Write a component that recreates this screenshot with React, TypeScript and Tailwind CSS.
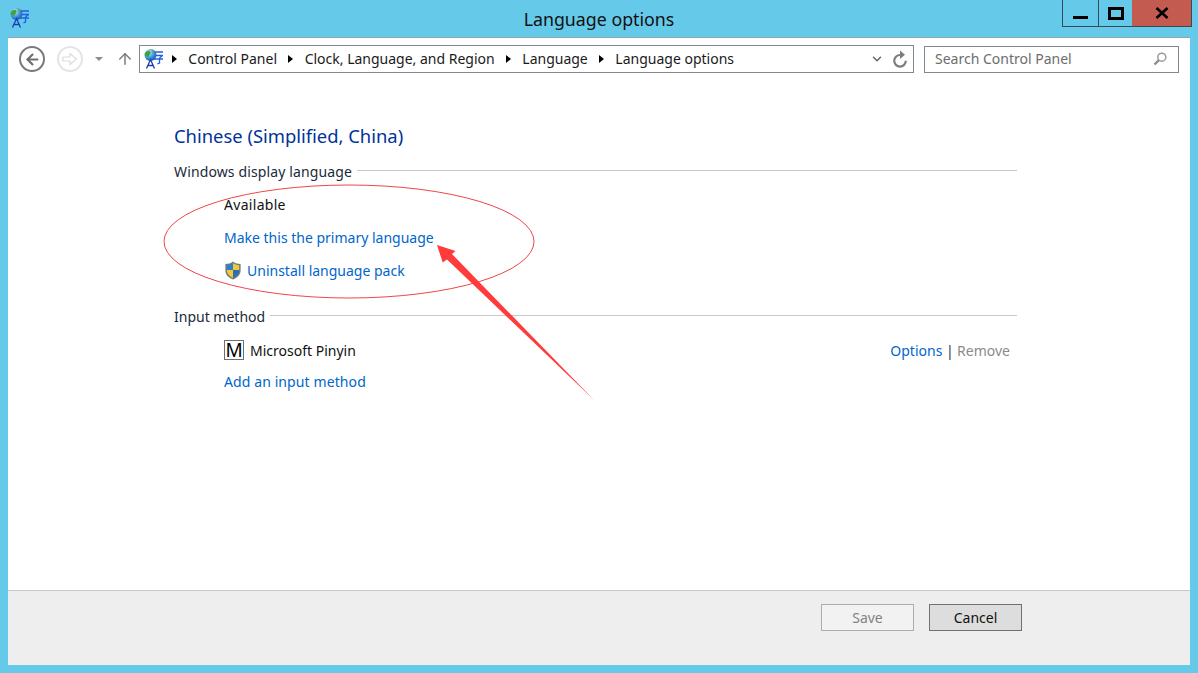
import { ArrowLeft, ArrowUp, ChevronDown } from "lucide-react";

function LanguageIcon({ className }: { className?: string }) {
  return (
    <svg viewBox="0 0 20 20" className={className}>
      <defs>
        <radialGradient id="globe" cx="35%" cy="30%" r="75%">
          <stop offset="0%" stopColor="#d8f0ff" />
          <stop offset="55%" stopColor="#3f9be0" />
          <stop offset="100%" stopColor="#1c5aa8" />
        </radialGradient>
      </defs>
      <circle cx="7.500" cy="6" r="6" fill="url(#globe)" />
      <path d="M2.500 3.500c2-2 4.500-1.800 5 0 .4 1.400-1 1.800-1.500 3.200-.4 1.200-2 1.800-3.400.4C1.500 6 1.600 4.500 2.500 3.500z" fill="#3fa33a" />
      <path d="M9 .5c1.600.4 2.600 1.200 3.200 2.500L9.500 4z" fill="#5cb548" />
      <path d="M3.500 19.500L7.500 10.500l4 9M5 16.500h5" fill="none" stroke="#1b3bb5" strokeWidth="1.300" />
      <path d="M11.500 3h8.500M13 6.500h6.500l-3 2.500M10.500 10h9.500M16.500 9v5l-2 .8" fill="none" stroke="#2360e0" strokeWidth="1.300" />
    </svg>
  );
}

function ShieldIcon() {
  return (
    <svg viewBox="0 0 18 20" className="h-[19px] w-[18px] shrink-0">
      <path d="M9 .5C6.500 2.500 4 3 1 3.200V10c0 4.500 3.500 7.500 8 9.500 4.500-2 8-5 8-9.500V3.200C14 3 11.500 2.500 9 .5z" fill="#6f7b80" />
      <path d="M9 2v7.500H2.500V4.400C5 4.200 7 3.500 9 2z" fill="#2f7fd0" />
      <path d="M9 2c2 1.500 4 2.200 6.500 2.400v5.100H9z" fill="#f4c92f" />
      <path d="M2.500 9.500H9v8.300c-3.500-1.700-6.500-4.200-6.500-8.300z" fill="#f4c92f" />
      <path d="M9 9.500h6.500c0 4.100-3 6.600-6.500 8.300z" fill="#2a6fbe" />
    </svg>
  );
}

function Crumb({ label }: { label: string }) {
  return (
    <>
      <span className="mt-[2px] h-0 w-0 border-y-[4.500px] border-l-[5px] border-y-transparent border-l-black" />
      <span>{label}</span>
    </>
  );
}

function SectionHead({ label, className }: { label: string; className?: string }) {
  return (
    <div className="flex h-[22px] items-center gap-[5px] text-[#1a2a3a]">
      <span className={className}>{label}</span>
      <span className="mt-[-2px] h-px flex-1 bg-[#c8c8c8]" />
    </div>
  );
}

export default function App() {
  return (
    <div className="relative flex h-[673px] w-[1198px] flex-col overflow-hidden bg-[#65c9ea] font-['Noto_Sans','Open_Sans',sans-serif] text-[14px] text-black">
      {/* title bar */}
      <div className="relative flex h-[37px] shrink-0 items-start justify-between pl-[9px]">
        <LanguageIcon className="mt-[8px] h-[20px] w-[20px]" />
        <div className="absolute inset-x-0 top-[7px] text-center text-[17.800px] leading-6 text-[#111]">Language options</div>
        <div className="mr-[6px] flex h-[27px] border border-t-0 border-[#3a4a55]">
          <div className="flex w-[36px] items-end justify-center border-r border-[#3a4a55] pb-[7px]">
            <span className="h-[3px] w-[15px] bg-black" />
          </div>
          <div className="flex w-[33px] items-start justify-center pt-[7px]">
            <span className="h-[13px] w-[16px] border-[3px] border-black" />
          </div>
          <div className="flex w-[59px] items-center justify-center bg-[#c35b50]">
            <svg viewBox="0 0 14 12" className="h-[12px] w-[14px]">
              <path d="M1.500 1l11 10M12.500 1l-11 10" stroke="#000" strokeWidth="2.600" fill="none" />
            </svg>
          </div>
        </div>
      </div>

      {/* window */}
      <div className="mx-[8px] mb-[8px] flex flex-1 flex-col border-t border-[#8fa6b2] bg-white">
        {/* nav bar */}
        <div className="flex h-[42px] items-center pl-[11px] pr-[11px]">
          <div className="flex h-[26px] w-[26px] items-center justify-center rounded-full border-2 border-[#7a7a7a]">
            <ArrowLeft className="h-[17px] w-[17px] text-[#6e6e6e]" strokeWidth={3} />
          </div>
          <div className="ml-[12px] flex h-[26px] w-[26px] items-center justify-center rounded-full border-2 border-[#e4e4e4]">
            <svg viewBox="0 0 16 14" className="h-[14px] w-[16px]">
              <path d="M1 5h7V1.500L14.500 7 8 12.500V9H1z" fill="none" stroke="#dcdcdc" strokeWidth="1.200" />
            </svg>
          </div>
          <span className="ml-[12px] h-0 w-0 border-x-[4px] border-t-[4px] border-x-transparent border-t-[#8c8c8c]" />
          <ArrowUp className="ml-[13px] h-[18px] w-[18px] text-[#7d7d7d]" strokeWidth={2} />
          <div className="ml-[5px] flex h-[28px] w-[775px] items-center border border-[#828790] pl-[3px] pr-[5px] text-[#1a1a1a]">
            <LanguageIcon className="h-[20px] w-[20px]" />
            <div className="mb-[2px] ml-[9px] flex flex-1 items-center gap-[11.300px]">
              <Crumb label="Control Panel" />
              <Crumb label="Clock, Language, and Region" />
              <Crumb label="Language" />
              <Crumb label="Language options" />
            </div>
            <ChevronDown className="h-[14px] w-[14px] text-[#666]" strokeWidth={2.500} />
            <svg viewBox="0 0 16 18" className="ml-[8px] h-[18px] w-[16px]">
              <path d="M8 5A5.800 5.800 0 1 0 13.800 10.800" fill="none" stroke="#7d7d7d" strokeWidth="2.200" />
              <path d="M8 .5v8.500l5-4.300z" fill="#7d7d7d" />
            </svg>
          </div>
          <div className="ml-[10px] flex h-[27px] w-[255px] items-center justify-between border border-[#828790] pl-[10px] pr-[11px] text-[#6d6d6d]">
            <span className="mb-[2px]">Search Control Panel</span>
            <svg viewBox="0 0 14 14" className="h-[14px] w-[14px]">
              <circle cx="8.800" cy="5.200" r="4" fill="none" stroke="#9a9a9a" strokeWidth="1.500" />
              <path d="M6 8L1.500 12.500" stroke="#8a8a8a" strokeWidth="2.400" />
            </svg>
          </div>
        </div>

        {/* content */}
        <div className="flex flex-1 flex-col pl-[166px] pr-[173px] pt-[42px]">
          <h1 className="text-[18.400px] leading-[28px] text-[#003399]">Chinese (Simplified, China)</h1>
          <div className="mt-[10px]">
            <SectionHead label="Windows display language" className="tracking-[0.130px]" />
          </div>
          <div className="flex flex-col pl-[50px]">
            <div className="mt-[12px] h-[22px] leading-[22px] tracking-[0.300px] text-[#111]">Available</div>
            <a className="mt-[11px] h-[22px] leading-[22px] text-[#0066cc]">Make this the primary language</a>
            <div className="mt-[10px] flex h-[22px] items-center gap-[5px] text-[#0066cc]">
              <ShieldIcon />
              <a>Uninstall language pack</a>
            </div>
          </div>
          <div className="mt-[24px]">
            <SectionHead label="Input method" />
          </div>
          <div className="mt-[12px] flex h-[22px] items-center pl-[50px] pr-[7px]">
            <span className="flex h-[20px] w-[20px] items-center justify-center border border-[#707070] text-[19px] leading-none text-black">M</span>
            <span className="ml-[6px] flex-1 text-[#111]">Microsoft Pinyin</span>
            <a className="text-[#0066cc]">Options</a>
            <span className="mx-[3.500px] text-[#333]">|</span>
            <span className="text-[#8a8a8a]">Remove</span>
          </div>
          <a className="ml-[50px] mt-[10px] h-[22px] leading-[22px] tracking-[0.100px] text-[#0066cc]">Add an input method</a>
        </div>

        {/* footer */}
        <div className="flex h-[75px] shrink-0 items-start justify-end gap-[15px] border-t border-[#c9c9c9] bg-[#eeeeee] pr-[168px] pt-[13px]">
          <button className="h-[27px] w-[93px] border border-[#adadad] bg-[#f2f2f2] text-[#838383]">Save</button>
          <button className="h-[27px] w-[93px] border border-[#707070] bg-[#dddddd] text-[#111]">Cancel</button>
        </div>
      </div>

      {/* annotation */}
      <svg className="pointer-events-none absolute inset-0" width="1198" height="673">
        <ellipse cx="349" cy="241.500" rx="185" ry="56.500" fill="none" stroke="#f0454a" strokeWidth="1" />
        <path d="M594 400L452 254 455.500 251 437 245 442.700 262.500 447 259.500z" fill="#ff3b3b" />
      </svg>
    </div>
  );
}
